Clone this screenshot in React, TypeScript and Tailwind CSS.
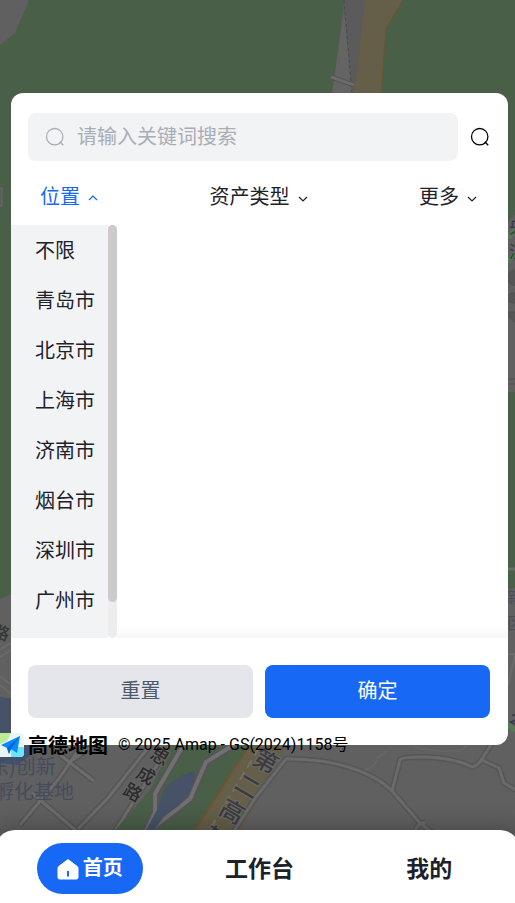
import { useState } from "react";

const cities = ["不限", "青岛市", "北京市", "上海市", "济南市", "烟台市", "深圳市", "广州市"];
const filters = ["位置", "资产类型", "更多"];
const tabs = ["工作台", "我的"];

function SearchIcon({ className }: { className?: string }) {
  return (
    <svg viewBox="0 0 20 20" fill="none" stroke="currentColor" className={className} aria-hidden="true">
      <circle cx="9.7" cy="9.7" r="8.2" strokeWidth="1.3" />
      <path d="M14.8 14.8 L18.2 18.2" strokeWidth="1.4" />
    </svg>
  );
}

function Chevron({ up }: { up?: boolean }) {
  return (
    <svg viewBox="0 0 10 10" fill="none" stroke="currentColor" strokeWidth="1.2" className="h-[10px] w-[10px]" aria-hidden="true">
      <path d={up ? "M1 7 L5 3 L9 7" : "M1 4 L5 8 L9 4"} />
    </svg>
  );
}

function MapBackdrop() {
  return (
    <svg
      viewBox="0 0 515 903"
      preserveAspectRatio="xMidYMid slice"
      className="absolute inset-0 h-full w-full font-['Noto_Sans_CJK_SC',sans-serif]"
      aria-hidden="true"
    >
      <defs>
        <linearGradient id="fade" x1="0" y1="0" x2="0" y2="1">
          <stop offset="0" stopColor="#000" stopOpacity="0" />
          <stop offset="1" stopColor="#000" stopOpacity="0.1" />
        </linearGradient>
      </defs>
      <rect width="515" height="903" fill="#606060" />
      <path d="M0 0H515V215L500 230V392H515V588L500 590V560H20V590L0 599Z" fill="#495f48" />
      <path d="M0 0H29L15 33L0 45Z" fill="#606060" />
      <rect x="-4" y="188" width="6" height="18" fill="#5c5c5c" stroke="#6a6a6a" />

      {/* north road */}
      <path d="M344 0H366L354 94H332Z" fill="#5b5b5b" />
      <path d="M344 10L352 94H332Z" fill="#646464" />
      <path d="M344 0L352 94" stroke="#484848" strokeDasharray="3 3" fill="none" />
      <path d="M365 0H403L386 29L381 94H354Z" fill="#655e48" />
      <path d="M403 0L386 29L381 94" stroke="#6b552f" fill="none" />
      <path d="M331 77L354 85" stroke="#505050" strokeWidth="5" fill="none" />
      <path d="M331 77L354 85" stroke="#6b6b6b" strokeWidth="3" fill="none" />

      {/* east edge */}
      <path d="M515 215L508 222V392H515Z" fill="#606060" />
      <path d="M508 238L515 230M508 262L515 254" stroke="#517a4d" strokeWidth="5" />
      <g fill="#555" stroke="#505050">
        <path d="M519 267L508 274V282L519 288Z" />
        <ellipse cx="514" cy="298" rx="7" ry="5" />
        <path d="M508 312L519 312V326L508 316Z" />
      </g>
      <path d="M506 379H515M506 384H515" stroke="#505050" />
      <path d="M506 569H515" stroke="#6b6b6b" strokeWidth="3" />
      <g fontSize="17" fill="#343848">
        <text x="509" y="233">央</text>
        <text x="509" y="258">流</text>
      </g>
      <g fontSize="16" fill="#4b4e5b">
        <text x="507" y="603">新</text>
        <text x="507" y="629">区</text>
      </g>
      <path d="M508 654H515L508 686" stroke="#6b6b6b" strokeWidth="2" fill="none" />
      <path d="M505 721L515 731" stroke="#547b4d" strokeWidth="5" />
      <text x="506" y="722" fontSize="18" fill="#30364c" transform="rotate(28 508 724)">公</text>

      {/* west edge */}
      <g fill="none" stroke="#6a6a6a" strokeWidth="2">
        <path d="M0 650L15 640M0 657L15 648M0 676L15 688M0 685L15 697" />
      </g>
      <text x="-9" y="636" fontSize="17" fontWeight="500" fill="#363636" transform="rotate(18 -8 636)">路</text>
      <path d="M0 697L14 699V760H0Z" fill="#475268" />
      <path d="M0 740H38L31 755L17 765L0 763Z" fill="#435170" />

      {/* south blocks */}
      <g fill="none" strokeLinejoin="round">
        <path
          d="M60 755L94 781M20 825L58 780L77 752M32 793L80 834M68 763L96 744M151 744L108 798L78 829M168 748L113 834"
          stroke="#555"
          strokeWidth="6"
        />
        <path
          d="M60 755L94 781M20 825L58 780L77 752M32 793L80 834M68 763L96 744M151 744L108 798L78 829M168 748L113 834"
          stroke="#6c6c6c"
          strokeWidth="3"
        />
      </g>
      <path d="M172 744H250L192 834H112L150 790Z" fill="#495f48" />
      <path d="M184 744L155 794L155 812L145 834M240 741L206 762L190 799L145 834" stroke="#555" strokeWidth="8" fill="none" />
      <path d="M184 744L155 794L155 812L145 834M240 741L206 762L190 799L145 834" stroke="#707070" strokeWidth="4" fill="none" />
      <path d="M195 771C181 774 168 783 163 792L157 810L145 832H153L165 815C184 805 194 790 195 771Z" fill="#475268" />
      <path d="M250 744H286L274 771L239 834H192Z" fill="#655e48" />
      <path d="M250 744L192 834" stroke="#6b552f" strokeWidth="2" fill="none" />
      <path d="M259 748L207 834" stroke="#777058" strokeDasharray="9 5" strokeWidth="2" fill="none" />
      <g fill="none" strokeLinejoin="round">
        <path
          d="M232 834L256 797L286 759C329 758 371 770 392 791L420 823L434 834M392 791L400 760Q401 757 424 757Q455 758 472 767Q479 765 482 759L494 740M482 760L499 768L504 783L519 792M415 830L420 823H425"
          stroke="#565656"
          strokeWidth="6"
        />
        <path
          d="M232 834L256 797L286 759C329 758 371 770 392 791L420 823L434 834M392 791L400 760Q401 757 424 757Q455 758 472 767Q479 765 482 759L494 740M482 760L499 768L504 783L519 792M415 830L420 823H425"
          stroke="#6a6a6a"
          strokeWidth="3"
        />
        <path d="M413 747Q440 753 462 750L468 744M365 770Q375 767 378 758L387 750" stroke="#666" strokeWidth="2" />
      </g>
      <g fontSize="18" fontWeight="500" fill="#2b2b2b" stroke="#666" strokeWidth="2" paintOrder="stroke">
        <text x="151" y="763" transform="rotate(30 160 756)">思</text>
        <text x="137" y="782" transform="rotate(30 146 775)">成</text>
        <text x="124" y="799" transform="rotate(30 133 792)">路</text>
      </g>
      <g fontSize="24" fontWeight="500" fill="#3c3c3c" stroke="#6b6b6b" strokeWidth="2" paintOrder="stroke">
        <text x="254" y="770" transform="rotate(30 266 761)">第</text>
        <text x="236" y="795" transform="rotate(30 248 786)">二</text>
        <text x="220" y="820" transform="rotate(30 232 812)">高</text>
        <text x="204" y="847" transform="rotate(30 216 839)">架</text>
      </g>
      <g fontSize="20" fill="#454c5e">
        <text x="-11" y="774">东)创新</text>
        <text x="-6" y="799">孵化基地</text>
      </g>
      <rect y="800" width="515" height="50" fill="url(#fade)" />
    </svg>
  );
}

function Attribution() {
  return (
    <div className="absolute -bottom-3 left-[-11px] flex h-6 items-center whitespace-nowrap text-black">
      <svg viewBox="0 0 24 24" className="h-6 w-6" aria-hidden="true">
        <rect x="-5" width="29" height="24" rx="4" fill="#eaf6f5" />
        <path d="M0 0H11L7 8L0 11Z" fill="#b9ee96" />
        <path d="M11 14H24V20Q24 24 20 24H11Z" fill="#6be5fa" />
        <path d="M1 12L20 3L17 20L11 16L9 21L7 15Z" fill="#078bfa" />
        <path d="M20 3L7 15L9 21L11 16Z" fill="#0865dc" />
      </svg>
      <span className="ml-1 text-xl font-bold leading-6">高德地图</span>
      <span className="ml-[10px] font-[Roboto,'Noto_Sans_CJK_SC',sans-serif] text-base leading-6">
        © 2025 Amap - GS(2024)1158号
      </span>
    </div>
  );
}

export default function App() {
  const [openFilter, setOpenFilter] = useState("位置");
  const [keyword, setKeyword] = useState("");

  return (
    <div className="relative flex min-h-screen flex-col overflow-hidden font-['Noto_Sans_CJK_SC',sans-serif] text-[#1d2129]">
      <MapBackdrop />

      <section className="relative mb-[85px] ml-[11px] mr-[7px] mt-[93px] rounded-xl bg-white">
        <div className="flex items-center pl-[17px] pr-[18px] pt-5">
          <label className="flex h-12 min-w-0 flex-1 items-center gap-3 rounded-lg bg-[#f2f3f5] px-[17px]">
            <SearchIcon className="h-5 w-5 shrink-0 text-[#a9adb5]" />
            <input
              type="text"
              aria-label="关键词"
              placeholder="请输入关键词搜索"
              value={keyword}
              onChange={(e) => setKeyword(e.target.value)}
              className="h-full min-w-0 flex-1 bg-transparent pb-1 text-xl outline-none placeholder:text-[#a9adb5]"
            />
          </label>
          <button type="button" aria-label="搜索" className="ml-3 text-black">
            <SearchIcon className="h-5 w-5" />
          </button>
        </div>

        <div className="flex h-16 items-center justify-between pl-[29px] pr-[31px] pt-[10px]">
          {filters.map((name) => {
            const open = name === openFilter;
            return (
              <button
                key={name}
                type="button"
                aria-expanded={open}
                onClick={() => setOpenFilter(name)}
                className={`flex items-center gap-2 text-xl leading-7 ${open ? "text-[#1769f5]" : ""}`}
              >
                <span className="pb-1">{name}</span>
                <Chevron up={open} />
              </button>
            );
          })}
        </div>

        <div className="flex h-[413px]">
          <ul className="w-[97px] overflow-hidden bg-[#f2f3f5]">
            {cities.map((city) => (
              <li key={city}>
                <button type="button" className="flex h-[50px] w-full items-center whitespace-nowrap pl-6 text-xl">
                  {city}
                </button>
              </li>
            ))}
          </ul>
          <div className="w-[9px] rounded-full bg-[#ededed]">
            <div className="h-[377px] rounded-full bg-[#cfcaca]" />
          </div>
          <div className="flex flex-1 items-end">
            <div className="h-3 w-full bg-linear-to-t from-[#f6f6f6] to-white" />
          </div>
        </div>

        <div className="flex gap-3 pb-[27px] pl-[17px] pr-[18px] pt-[27px] text-xl">
          <button type="button" className="h-[53px] flex-1 rounded-lg bg-[#e5e6eb] pb-1 text-[#4e5969]">
            重置
          </button>
          <button type="button" className="h-[53px] flex-1 rounded-lg bg-[#1769f5] pb-1 text-white">
            确定
          </button>
        </div>

        <Attribution />
      </section>

      <nav className="relative -mx-[5px] mt-auto grid grid-cols-3 items-center rounded-t-[20px] bg-white pb-[9px] pl-[10px] pr-[6px] pt-[13px] shadow-[0_-4px_16px_rgba(0,0,0,0.15)]">
        <a
          href="#home"
          aria-current="page"
          className="flex h-[51px] w-[106px] items-center justify-center gap-1 justify-self-center rounded-full bg-[#1769f5] text-xl font-bold text-white"
        >
          <svg viewBox="0 0 22 22" className="h-[22px] w-[22px]" aria-hidden="true">
            <path
              d="M11 1.5L20 8.3Q21 9 21 10.2V19.5Q21 21 19.5 21H2.5Q1 21 1 19.5V10.2Q1 9 2 8.3Z"
              fill="currentColor"
              stroke="currentColor"
              strokeLinejoin="round"
            />
            <path d="M11 13V18.5" stroke="#1769f5" strokeWidth="2" />
          </svg>
          <span className="pb-1">首页</span>
        </a>
        {tabs.map((tab) => (
          <a key={tab} href="#" className="pb-1 text-center text-[23px] font-bold leading-8">
            {tab}
          </a>
        ))}
      </nav>
    </div>
  );
}
